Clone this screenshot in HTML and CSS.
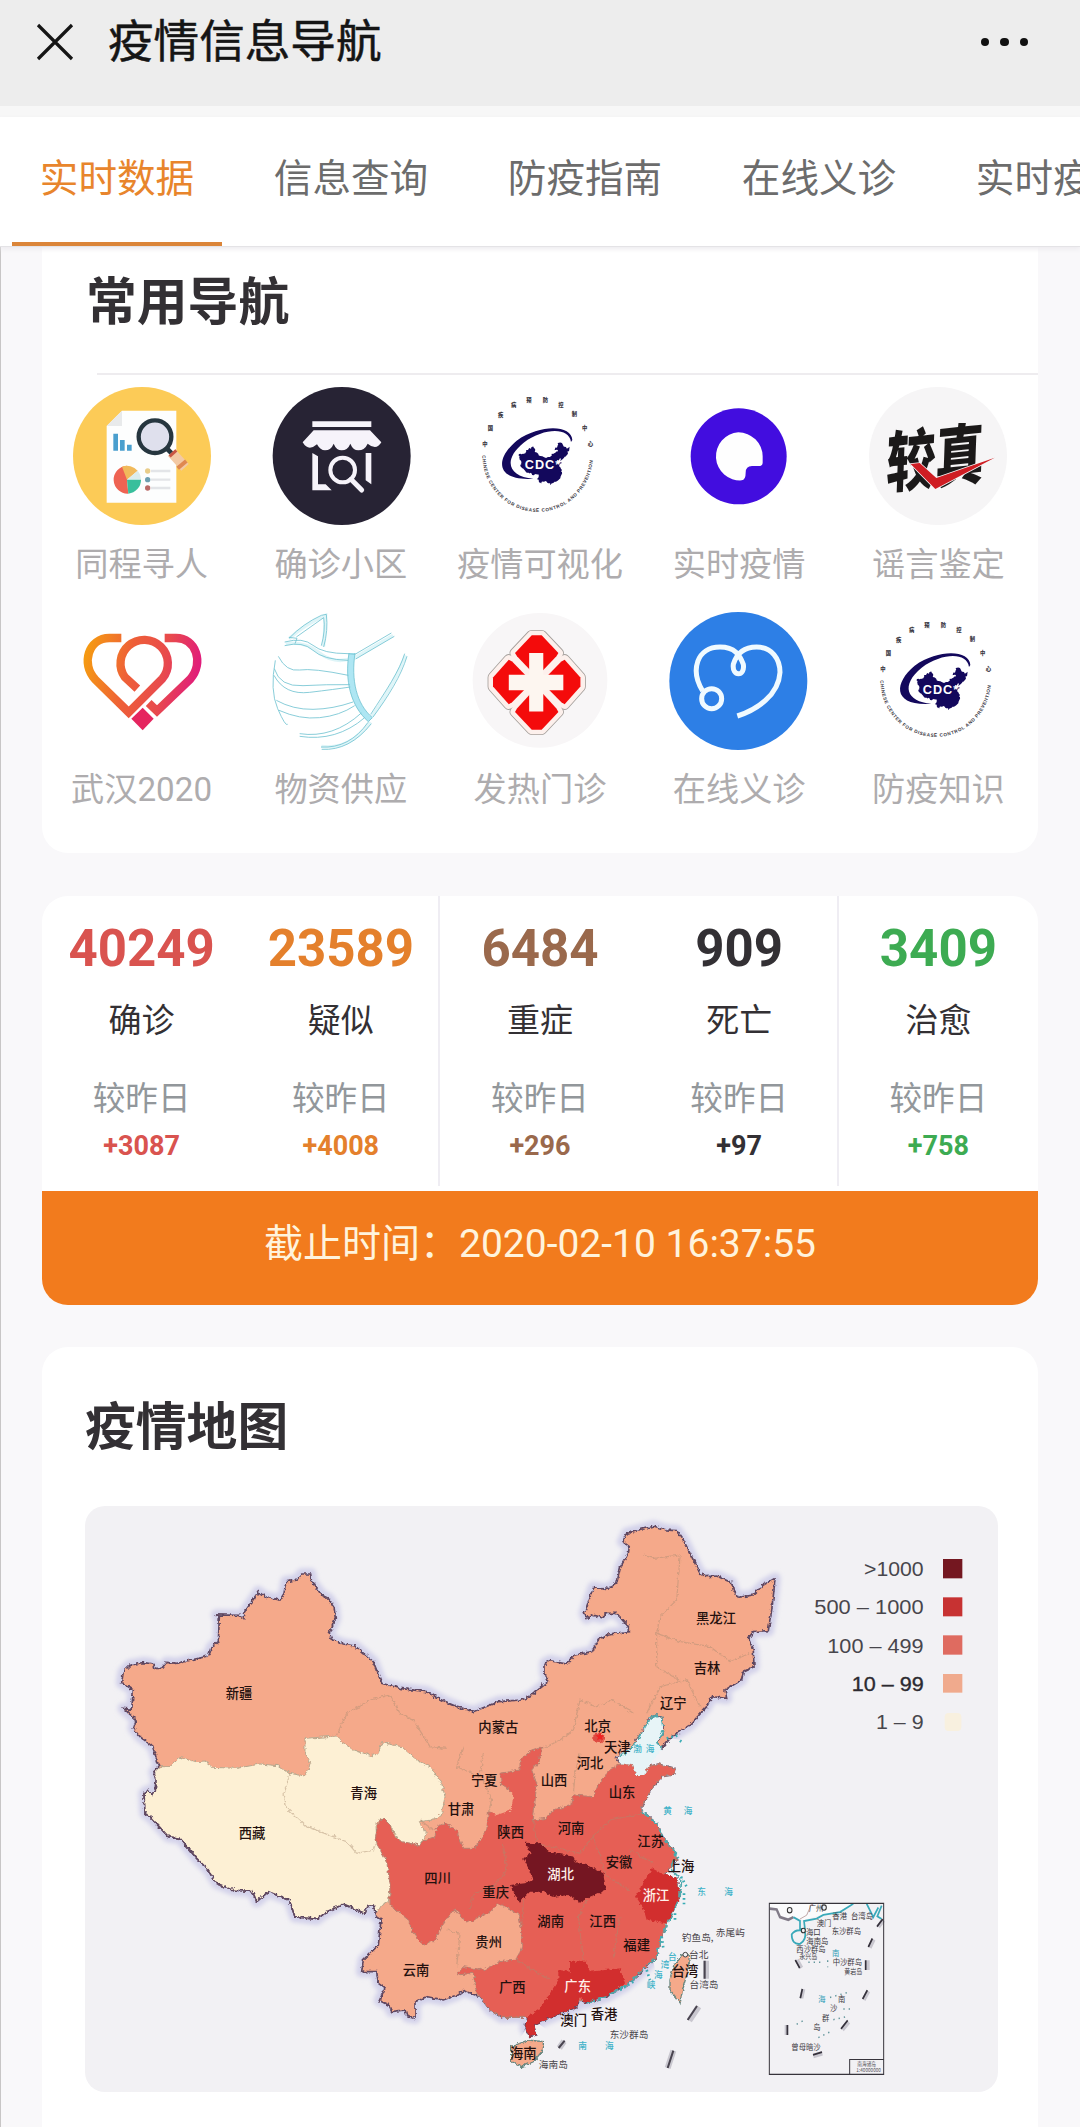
FILE: index.html
```html
<!DOCTYPE html>
<html lang="zh-CN">
<head>
<meta charset="utf-8">
<title>疫情信息导航</title>
<link rel="stylesheet" href="styles.css">
</head>
<body>
<svg class="defs" width="0" height="0" aria-hidden="true">
  <defs>
    <path id="china" d="M237,800L218,740 180,710 160,685 168,660 130,625 155,628 160,570 125,548 130,515 150,495 192,488 218,492 222,505 245,505 260,487 290,490 385,468 395,440 415,425 418,350 410,345 478,346 492,355 495,335 535,275 555,290 600,300 612,280 618,245 650,240 665,222 692,222 695,245 725,285 745,295 762,320 766,355 748,400 755,418 790,432 825,438 880,485 905,550 960,565 1040,575 1090,603 1135,622 1180,635 1255,605 1325,600 1355,585 1405,545 1395,520 1395,490 1410,482 1460,492 1485,465 1535,455 1555,420 1585,402 1645,395 1645,380 1610,340 1580,340 1565,353 1535,345 1520,355 1513,340 1525,305 1540,262 1580,268 1610,250 1622,200 1645,160 1648,140 1628,125 1640,100 1720,78 1760,90 1790,92 1810,120 1860,220 1880,230 1910,228 1955,248 1960,270 1975,292 2020,285 2050,255 2085,235 2082,270 2075,330 2065,392 2020,395 2005,415 2020,450 2022,500 1990,515 1985,540 1935,570 1940,595 1895,590 1880,620 1830,675 1775,710 1745,745 1733,730 1750,690 1745,655 1730,645 1710,655 1690,690 1670,720 1655,745 1625,760 1610,775 1620,790 1655,795 1668,825 1690,825 1705,800 1735,792 1765,800 1785,805 1780,825 1745,830 1715,865 1685,920 1685,935 1730,970 1750,1015 1780,1050 1790,1080 1770,1105 1750,1125 1790,1135 1800,1190 1780,1235 1760,1270 1740,1320 1730,1370 1680,1420 1640,1455 1580,1490 1515,1510 1500,1490 1490,1520 1380,1565 1360,1575 1370,1605 1350,1610 1335,1585 1340,1550 1265,1552 1230,1530 1200,1490 1150,1472 1130,1485 1090,1500 1040,1490 1005,1505 1005,1555 982,1550 975,1530 935,1535 925,1515 898,1502 915,1465 895,1450 890,1415 845,1415 850,1380 895,1335 903,1260 888,1250 880,1215 865,1215 855,1240 790,1213 740,1235 710,1258 645,1250 628,1200 565,1175 530,1205 518,1175 460,1170 410,1150 385,1110 350,1075 300,1015 265,1010 215,955 195,940 192,880 205,872 215,885 226,870 228,840 222,815Z"/>
    <linearGradient id="heart" gradientUnits="userSpaceOnUse" x1="135" y1="860" x2="480" y2="930">
      <stop offset="0" stop-color="#f59a12"/><stop offset=".38" stop-color="#ee5f38"/><stop offset=".68" stop-color="#e84a4d"/><stop offset="1" stop-color="#e0187f"/>
    </linearGradient>
    <g id="petals">
      <path d="M-15,-142H15L66,-88 60,-78 10,-26H-10L-60,-78 -66,-88Z"/>
      <path d="M-15,145H15L66,91 60,81 10,26H-10L-60,81 -66,91Z"/>
      <path d="M133,-14V14L85,68 75,62 26,12V-12L75,-62 85,-68Z"/>
      <path d="M-133,-14V14L-85,68 -75,62 -26,12V-12L-75,-62 -85,-68Z"/>
    </g>
    <symbol id="cdc" viewBox="988 725 414 414">
      <path d="M1175,1000C1060,1008 1060,940 1125,886C1200,834 1290,840 1292,884L1288,890C1282,846 1210,846 1146,892C1082,944 1100,994 1175,1000Z" fill="#13085c"/>
      <use href="#china" transform="translate(1121 885) scale(.078 .083)" fill="#13085c"/>
      <text class="cdc-word" x="1204" y="972">CDC*</text>
      <path id="cdc-arc" d="M1022,930A166,170 0 0 0 1354,930" fill="none"/>
      <text class="cdc-ring"><textPath href="#cdc-arc" textLength="512">CHINESE CENTER FOR DISEASE CONTROL AND PREVENTION</textPath></text>
      <g class="cdc-cn"><text x="1030" y="902">中</text><text x="1046" y="855">国</text><text x="1077" y="815">疾</text><text x="1116" y="785">病</text><text x="1162" y="771">预</text><text x="1211" y="771">防</text><text x="1258" y="785">控</text><text x="1298" y="813">制</text><text x="1329" y="853">中</text><text x="1346" y="902">心</text></g>
    </symbol>
    <filter id="rough" x="-5%" y="-5%" width="110%" height="110%">
      <feTurbulence type="fractalNoise" baseFrequency=".09" numOctaves="3" seed="4"/>
      <feDisplacementMap in="SourceGraphic" scale="14" xChannelSelector="R" yChannelSelector="G"/>
    </filter>
    <filter id="glow" x="-5%" y="-5%" width="110%" height="110%"><feGaussianBlur stdDeviation="7"/></filter>
  </defs>
</svg>

<header class="topbar">
  <svg class="close" viewBox="0 0 38 38"><path d="M2 2 36 36M36 2 2 36"/></svg>
  <h1>疫情信息导航</h1>
  <span class="more"><i></i><i></i><i></i></span>
</header>
<nav class="tabs">
  <a class="active">实时数据</a><a>信息查询</a><a>防疫指南</a><a>在线义诊</a><a>实时疫情</a>
</nav>

<main>
  <section class="card links">
    <h2>常用导航</h2>
    <div class="grid">
      <div class="item">
        <svg viewBox="98 50 414 414">
          <circle cx="305" cy="257" r="207" fill="#fccb57"/>
          <path d="M245,121H408V397H199V167Z" fill="#fdfefe"/><path d="M245,121V167H199Z" fill="#e8eaeb"/>
          <path d="M219,190h14v51h-14zM239,209h14v32h-14zM260,223h14v18h-14z" fill="#4a9fce"/>
          <path d="M260,328V286A42,42 0 1 0 264,370Z" fill="#ee6352"/><path d="M260,328 245,289A42,42 0 0 1 292,301Z" fill="#f1ba5b"/><path d="M260,328 292,301A42,42 0 0 1 302,328Z" fill="#dbeceb"/><path d="M260,328H302A42,42 0 0 1 264,370Z" fill="#38bf9c"/>
          <path d="M332,302h58M332,328h58M332,353h58" stroke="#e3e5e8" stroke-width="7"/>
          <circle cx="322" cy="302" r="8" fill="#e9cd8a"/><circle cx="322" cy="328" r="8" fill="#6d9fb1"/><circle cx="322" cy="353" r="8" fill="#ba6b68"/>
          <path d="M375,230 400,255" stroke="#26363f" stroke-width="14"/>
          <path d="M394,247 434,291" stroke="#f3c9a4" stroke-width="30"/><path d="M388,258 408,240" stroke="#c95543" stroke-width="9"/><path d="M412,294 438,272" stroke="#df8850" stroke-width="12"/>
          <circle cx="344" cy="199" r="49" fill="#dfe0ed" stroke="#26363f" stroke-width="13"/>
        </svg><span>同程寻人</span>
      </div>
      <div class="item">
        <svg viewBox="697 50 414 414">
          <circle cx="906" cy="257" r="207" fill="#272334"/>
          <path d="M818,153H995V170H818Z" fill="#f6f3fa"/>
          <path d="M822,180H991L1025,216Q1010,242 984,220Q975,240 956,240Q940,240 932,220Q924,240 906,240Q890,240 882,220Q874,240 856,240Q842,240 832,222Q806,245 789,216Z" fill="#f6f3fa"/>
          <path d="M818,248 835,258V342H858L876,360H818ZM978,248H995V342L978,330Z" fill="#f6f3fa"/>
          <circle cx="909" cy="299" r="37" fill="none" stroke="#f6f3fa" stroke-width="12"/><path d="M934,327 966,359" stroke="#f6f3fa" stroke-width="15" stroke-linecap="round"/>
        </svg><span>确诊小区</span>
      </div>
      <div class="item"><svg viewBox="0 0 414 414"><use href="#cdc" width="414" height="414"/></svg><span>疫情可视化</span></div>
      <div class="item">
        <svg viewBox="390 50 414 414">
          <circle cx="596" cy="258" r="144" fill="#420ddf"/>
          <path d="M595,186A73,73 0 0 1 668,258V277Q668,287 655,287H636Q617,287 617,307Q617,329 605,330A72,72 0 1 1 595,186Z" fill="#fefefe"/>
        </svg><span>实时疫情</span>
      </div>
      <div class="item">
        <svg viewBox="988 50 414 414">
          <circle cx="1195" cy="257" r="207" fill="#f6f5f6"/>
          <text class="jz" transform="translate(1038 352) rotate(-6) skewX(-8) scale(.92 1.24)">较真</text>
          <path d="M1113,281 1140,278 1190,323 1365,262 1187,356Z" fill="#cf1d23" stroke="#f6f5f6" stroke-width="5" paint-order="stroke"/>
        </svg><span>谣言鉴定</span>
      </div>
      <div class="item">
        <svg viewBox="98 725 414 414">
          <g fill="none" stroke="url(#heart)" stroke-width="25">
            <path d="M243,803H207C145,803 120,880 165,928L265,1026 366,925A71,71 0 1 0 254,921L291,955"/>
            <path d="M373,803H407C467,803 492,878 450,926L350,1022 325,998"/>
          </g>
          <path d="M307,1012 340,1045 307,1080 273,1045Z" fill="#e5255f"/>
        </svg><span>武汉2020</span>
      </div>
      <div class="item">
        <svg viewBox="697 725 414 414">
          <g fill="none" stroke="#dff5f8" stroke-width="10"><path d="M748,805Q800,760 858,735L852,828M738,820Q795,812 840,848T945,862L1060,795M1098,855Q1060,950 995,1040M845,1128Q930,1140 992,1055"/></g>
          <path d="M928,848H946C934,930 950,1000 998,1042L986,1054C932,1006 915,930 928,848Z" fill="#aee6f3"/>
          <g fill="none" stroke="#71c3d1" stroke-width="2.5">
            <path d="M748,804Q790,760 845,735L860,732Q866,780 852,830M770,800 852,742Q858,780 845,826"/>
            <path d="M735,815Q790,800 820,825T925,850L946,852 1055,788M735,826Q790,812 820,840T925,870M948,866 1064,798M748,801 772,804 766,820"/>
            <path d="M928,848C915,930 932,1006 986,1054L998,1042C950,1000 934,930 946,848"/>
            <path d="M1095,850C1080,900 1040,960 993,1032M1102,858C1085,915 1045,980 1000,1040"/>
            <path d="M716,858Q740,905 780,899T926,915M704,895Q720,950 790,946T930,943M703,915Q735,975 810,966T932,950M710,990Q760,1018 820,1017T940,995M718,1020Q780,1048 840,1042T945,1006M780,1090Q880,1105 965,1028M780,1098Q890,1115 975,1042"/>
            <path d="M707,870Q690,960 714,1015T744,1062M844,1130Q930,1135 985,1056M846,1137Q930,1142 995,1060"/>
          </g>
        </svg><span>物资供应</span>
      </div>
      <div class="item">
        <svg viewBox="-210 -213 420 420">
          <circle r="205" cy="-5" fill="#f8f6f7"/>
          <g transform="translate(-10 0)" stroke-linejoin="round">
            <use href="#petals" fill="#a49f9b" stroke="#a49f9b" stroke-width="33"/>
            <use href="#petals" fill="#fdf0ec" stroke="#fdf0ec" stroke-width="28"/>
            <use href="#petals" fill="#f40b0b"/>
            <path d="M-23,-88H20V-22H81V25H20V90H-23V25H-85V-22H-23Z" fill="#fdf6f0"/>
          </g>
        </svg><span>发热门诊</span>
      </div>
      <div class="item">
        <svg viewBox="390 725 414 414">
          <circle cx="595" cy="932" r="207" fill="#2d7fe6"/>
          <g fill="none" stroke="#f0faff" stroke-width="15"><circle cx="515" cy="985" r="30"/>
          <path d="M488,962C450,900 470,830 540,830C585,830 600,855 610,882C616,920 575,920 580,882C588,855 605,830 650,830C695,830 720,865 720,906C716,975 650,1018 592,1037"/></g>
        </svg><span>在线义诊</span>
      </div>
      <div class="item"><svg viewBox="0 0 414 414"><use href="#cdc" width="414" height="414"/></svg><span>防疫知识</span></div>
    </div>
  </section>

  <section class="card stats">
    <div class="cols">
      <div class="stat red"><b>40249</b><span>确诊</span><small>较昨日</small><em>+3087</em></div>
      <div class="stat orange"><b>23589</b><span>疑似</span><small>较昨日</small><em>+4008</em></div>
      <div class="stat brown line"><b>6484</b><span>重症</span><small>较昨日</small><em>+296</em></div>
      <div class="stat dark"><b>909</b><span>死亡</span><small>较昨日</small><em>+97</em></div>
      <div class="stat green line"><b>3409</b><span>治愈</span><small>较昨日</small><em>+758</em></div>
    </div>
    <div class="time">截止时间：2020-02-10 16:37:55</div>
  </section>

  <section class="card map">
    <h2>疫情地图</h2>
    <svg class="chart" viewBox="15 18 2739 1758">
      <use href="#china" fill="#d3d2ea" stroke="#d3d2ea" stroke-width="34" stroke-linejoin="round" filter="url(#glow)"/>
      <path d="M1775,715 1720,600 1600,740 1560,800 1640,900 1740,1500 1500,1640 1300,1640 1360,1560 1700,1800 2400,1500 2200,800Z" fill="#f2f1f4"/>
      <g filter="url(#rough)">
        <use href="#china" fill="#f5a98a" stroke="#5e4660" stroke-width="5"/>
        <path fill="#fdf0d4" stroke="#b7a78d" stroke-width="3" d="M237,800 270,800 300,772 345,785 375,783 400,802 470,805 540,792 595,797 630,820 675,828 692,790 675,755 675,715 770,708 785,725 820,750 875,767 895,760 905,728 965,740 1010,780 1050,800 1085,850 1095,890 1085,940 1060,960 1015,965 1040,1000 1020,1035 960,1025 930,975 905,955 888,970 890,1020 915,1050 925,1085 932,1150 925,1205 905,1215 890,1240 880,1215 865,1215 855,1240 790,1213 740,1235 710,1258 645,1250 628,1200 565,1175 530,1205 518,1175 460,1170 410,1150 385,1110 350,1075 300,1015 265,1010 215,955 195,940 192,880 205,872 215,885 226,870 228,840 222,815Z"/>
        <path fill="none" stroke="#5e4660" stroke-width="5" d="M890,1240 880,1215 865,1215 855,1240 790,1213 740,1235 710,1258 645,1250 628,1200 565,1175 530,1205 518,1175 460,1170 410,1150 385,1110 350,1075 300,1015 265,1010 215,955 195,940 192,880 205,872 215,885 226,870 228,840 222,815 237,800"/>
        <path fill="#e65f55" stroke="#b98272" stroke-width="3" d="M885,1022 895,965 910,955 930,975 945,1010 965,1025 1020,1035 1035,1020 1065,1010 1070,980 1095,970 1130,990 1150,1045 1185,1045 1205,1010 1220,990 1225,940 1290,930 1295,905 1290,870 1265,855 1260,820 1320,810 1320,780 1355,750 1385,740 1378,785 1355,810 1370,850 1360,960 1400,955 1420,930 1475,915 1480,885 1540,890 1555,850 1590,810 1620,790 1655,795 1668,825 1690,825 1705,800 1735,792 1765,800 1785,805 1780,825 1745,830 1715,865 1685,920 1685,935 1730,970 1750,1015 1780,1050 1790,1080 1770,1105 1750,1125 1790,1135 1800,1190 1780,1235 1760,1270 1740,1320 1730,1370 1680,1420 1640,1455 1500,1500 1340,1552 1265,1552 1230,1530 1200,1490 1190,1480 1180,1420 1130,1425 1150,1400 1210,1410 1260,1385 1310,1380 1325,1340 1325,1290 1315,1240 1290,1230 1270,1215 1250,1215 1230,1235 1190,1255 1175,1265 1150,1260 1130,1230 1115,1235 1090,1270 1065,1320 1030,1335 1000,1300 985,1260 930,1215 930,1150 920,1085Z"/>
        <path fill="#f5a98a" d="M1225,935 1235,865 1270,865 1300,880 1295,930 1250,945Z"/>
        <path class="border" d="M630,820 612,880 620,925 680,980 760,1010 800,1025 830,1060 880,1050 890,1020M770,705 800,640 870,600 930,585 960,640 1000,660 1050,740 1100,745M1020,960 1060,990M1150,740 1130,800 1200,830 1210,760M1210,840 1235,900 1225,940M1380,750 1440,720 1480,690 1500,600 1550,620 1600,600 1660,640M1480,885 1485,820 1500,760M1700,640 1740,560 1820,540 1860,620M1730,400 1800,425 1890,440 1950,485 2010,460M1800,170 1790,300 1740,350 1730,400 1730,500 1800,540M1690,165 1720,175 1800,165M1270,1030 1280,1110 1240,1160 1180,1180 1170,1230M1360,960 1370,1030M1370,1030 1500,1060 1540,1010 1590,960 1690,940M1540,1010 1580,1130 1650,1170M1520,1200 1495,1250 1510,1380M1620,1250 1600,1370M1325,1290 1330,1200M1310,1380 1410,1440M1180,1420 1190,1480M1100,1290 1140,1300 1130,1400M1650,1050 1720,1090"/>
        <path fill="#d22d2e" d="M1715,1105 1745,1120 1790,1135 1800,1190 1780,1235 1760,1270 1700,1260 1690,1225 1665,1190 1685,1160Z"/>
        <path fill="#741720" d="M1335,1028 1380,1030 1405,1055 1480,1070 1490,1088 1520,1095 1570,1120 1578,1170 1530,1190 1500,1208 1465,1185 1420,1190 1390,1175 1350,1175 1320,1205 1305,1185 1290,1155 1335,1150 1360,1140 1345,1105 1330,1075 1352,1060Z"/>
        <path fill="#d22d2e" d="M1470,1385 1520,1385 1530,1415 1620,1405 1635,1450 1580,1490 1515,1510 1500,1490 1490,1520 1380,1565 1360,1575 1370,1605 1350,1610 1335,1585 1340,1550 1380,1525 1410,1480 1435,1440 1435,1410 1470,1415Z"/>
        <path fill="#f5a98a" stroke="#68867f" stroke-width="4" d="M1805,1365H1828L1825,1410 1810,1460 1800,1508 1770,1470 1770,1440 1780,1400ZM1295,1640 1345,1620 1390,1625 1390,1650 1360,1685 1325,1700 1295,1685Z"/>
        <path fill="#df4b42" d="M1540,705 1562,696 1575,715 1560,730 1540,722Z"/>
        <path fill="#e7f4f7" d="M1745,745 1733,730 1750,690 1745,655 1730,645 1710,655 1690,690 1670,720 1655,745 1625,760 1610,775 1620,790 1655,795 1668,825 1690,825 1705,800 1735,760Z"/>
        <path fill="none" stroke="#4fa9ad" stroke-width="5" d="M1745,745 1733,730 1750,690 1745,655 1730,645 1710,655 1690,690 1655,745 1620,770M1685,935 1730,970 1750,1015 1790,1060 1770,1105 1805,1140 1800,1190 1780,1235 1740,1320 1730,1370 1640,1455 1580,1490 1515,1510" stroke-dasharray="28 9"/>
      </g>
      <path d="M1760,715 1800,705M1800,722 1808,728M1785,1060 1795,1075M1803,1130 1820,1160M1812,1180V1215M1785,1240V1262M1745,1310 1750,1345M1700,1410 1710,1440M1620,1470 1660,1445" stroke="#39acb5" stroke-width="8" stroke-dasharray="5 9"/>
      <g class="prov">
        <text x="477" y="595">新疆</text><text x="851" y="893">青海</text><text x="516" y="1015">西藏</text><text x="1073" y="1149">四川</text><text x="1008" y="1426">云南</text>
        <text x="1908" y="369">黑龙江</text><text x="1881" y="518">吉林</text><text x="1780" y="624">辽宁</text><text x="1255" y="696">内蒙古</text><text x="1553" y="694">北京</text><text x="1612" y="757">天津</text><text x="1530" y="804">河北</text><text x="1213" y="854">宁夏</text><text x="1422" y="854">山西</text><text x="1626" y="892">山东</text><text x="1143" y="941">甘肃</text>
        <text x="1292" y="1010">陕西</text><text x="1473" y="999">河南</text><text x="1712" y="1038">江苏</text><text x="1617" y="1102">安徽</text><text x="1803" y="1112">上海</text><text x="1247" y="1191">重庆</text><text x="1412" y="1279">湖南</text><text x="1568" y="1279">江西</text><text x="1226" y="1340">贵州</text><text x="1670" y="1351">福建</text><text x="1297" y="1475">广西</text><text x="1815" y="1429">台湾</text><text x="1572" y="1556">香港</text><text x="1481" y="1576">澳门</text><text x="1330" y="1674">海南</text>
        <g class="light"><text x="1442" y="1138">湖北</text><text x="1728" y="1199">浙江</text><text x="1493" y="1474">广东</text></g>
      </g>
      <path d="M1560,697 1564,706 1574,706 1566,712 1569,721 1560,716 1551,721 1554,712 1546,706 1556,706Z" fill="#f02222"/>
      <g class="isle"><text x="1647" y="1615">东沙群岛</text><text x="1420" y="1704">海南岛</text><text x="1872" y="1465">台湾岛</text><text x="1856" y="1374">台北</text><text x="1853" y="1324">钓鱼岛,</text><text x="1951" y="1307">赤尾屿</text></g>
      <circle cx="1816" cy="1364" r="7" fill="#f2f1f4" stroke="#444" stroke-width="3"/>
      <g class="sea"><text x="1673" y="755">渤</text><text x="1710" y="755">海</text><text x="1763" y="943">黄</text><text x="1824" y="943">海</text><text x="1865" y="1184">东</text><text x="1946" y="1184">海</text><text x="1508" y="1646">南</text><text x="1588" y="1646">海</text><text x="1777" y="1379">台</text><text x="1755" y="1404">湾</text><text x="1735" y="1433">海</text><text x="1713" y="1465">峡</text></g>
      <g stroke="#c9c7cf" stroke-width="18"><path d="M1878,1382V1436M1828,1562 1856,1520M1763,1704 1780,1652M1438,1644 1452,1624"/></g>
      <g stroke="#49444f" stroke-width="6"><path d="M1874,1382V1436M1823,1560 1851,1518M1763,1704 1780,1652M1436,1644 1454,1622"/></g>

      <g class="legend">
        <text x="2352" y="227" textLength="179" lengthAdjust="spacingAndGlyphs">&gt;1000</text><rect x="2589" y="177" width="58" height="58" fill="#741720"/>
        <text x="2203" y="342" textLength="328" lengthAdjust="spacingAndGlyphs">500 – 1000</text><rect x="2589" y="292" width="58" height="57" fill="#c73232"/>
        <text x="2242" y="458" textLength="289" lengthAdjust="spacingAndGlyphs">100 – 499</text><rect x="2589" y="406" width="58" height="58" fill="#df6b60"/>
        <text class="on" x="2315" y="573" textLength="216" lengthAdjust="spacingAndGlyphs">10 – 99</text><rect x="2589" y="522" width="58" height="56" fill="#f0aa8d"/>
        <text x="2388" y="688" textLength="143" lengthAdjust="spacingAndGlyphs">1 – 9</text><rect x="2594" y="639" width="50" height="54" rx="12" fill="#f8f0df"/>
      </g>

      <g transform="translate(1980 0) scale(1 1.148)">
        <path d="M89,1055H340L310,1070 270,1080 230,1088 190,1098 160,1090 140,1092 120,1088 110,1070 89,1068Z" fill="#fbfbfc"/>
        <path d="M89,1068 110,1070 120,1090 145,1097 160,1090" fill="none" stroke="#817b88" stroke-width="7"/>
        <path d="M160,1090 180,1100 180,1120 195,1122 192,1100 230,1094 250,1084 300,1077 340,1055M155,1135Q170,1118 195,1128Q200,1150 180,1160Q155,1162 155,1135ZM380,1055 400,1090 415,1065M425,1060 412,1088 425,1095" fill="none" stroke="#39a9b9" stroke-width="5"/>
        <g fill="#f2f1f4" stroke="#333" stroke-width="3"><circle cx="149" cy="1072" r="7"/><circle cx="252" cy="1065" r="7"/><circle cx="190" cy="1125" r="6"/></g>
        <g fill="none" stroke="#a88" stroke-width="2"><path d="M215,1055 200,1085 180,1095"/></g>
        <g stroke="#c9c7cf" stroke-width="12"><path d="M415,1115 430,1098M389,1170 401,1148M171,1202 184,1223M383,1203V1228M184,1302 190,1278M371,1306 385,1283M307,1384 326,1364M140,1372V1398M220,1453 247,1446"/></g>
        <g stroke="#35313b" stroke-width="5"><path d="M411,1115 428,1095M385,1168 397,1146M166,1202 179,1223M377,1203V1228M181,1302 187,1278M368,1304 382,1281M303,1382 323,1360M142,1372V1398M219,1450 246,1443"/></g>
        <g class="mini"><text x="228" y="1074">广州</text><text x="252" y="1113">澳门</text><text x="299" y="1096">香港</text><text x="366" y="1096">台湾岛</text><text x="319" y="1135">东沙群岛</text><text x="220" y="1138">海口</text><text x="232" y="1160">海南岛</text><text x="213" y="1182">西沙群岛</text><text class="small" x="205" y="1200">永兴岛</text><text x="322" y="1215">中沙群岛</text><text class="small" x="340" y="1238">黄岩岛</text><text x="305" y="1313">南</text><text x="281" y="1336">沙</text><text x="257" y="1361">群</text><text x="231" y="1384">岛</text><text x="198" y="1438">曾母暗沙</text></g>
        <g class="mini blue"><text x="287" y="1191">南</text><text x="246" y="1313">海</text></g>
        <path d="M205,1208h40M263,1203v18M270,1300 330,1285M310,1330h30M280,1358 320,1350M170,1370 195,1358M235,1405 270,1390" stroke="#62959b" stroke-width="4" stroke-dasharray="4 12"/>
        <path d="M88,1054H431V1501H88ZM329,1501V1462H431" fill="none" stroke="#37343b" stroke-width="3"/>
        <g class="tiny"><text x="380" y="1480">南海诸岛</text><text x="386" y="1496">1:40000000</text></g>
      </g>
    </svg>
  </section>
</main>
</body>
</html>
```
FILE: styles.css
```css
* { box-sizing: border-box; }
body {
  margin: 0;
  width: 1080px;
  height: 2127px;
  overflow: hidden;
  background: #f9f8fa;
  box-shadow: inset 1px 0 #c8c6c6;
  color: #333034;
  font-family: Roboto, "Noto Sans CJK SC", sans-serif;
}
.defs { position: absolute; }
h1, h2 { margin: 0; }

.topbar {
  display: flex;
  align-items: center;
  height: 117px;
  padding: 0 52px 22px 36px;
  background: #ededed;
  border-bottom: 11px solid #f7f7f7;
}
.close { width: 38px; height: 38px; fill: none; stroke: #151515; stroke-width: 3.2; }
.topbar h1 { margin-left: 34px; padding-top: 2px; font-size: 45.6px; font-weight: 400; line-height: 82px; color: #151515; -webkit-text-stroke: .5px #151515; }
.more { display: flex; gap: 11px; margin-left: auto; }
.more i { width: 8.5px; height: 8.5px; border-radius: 50%; background: #111; }

.tabs {
  display: flex;
  height: 130px;
  padding-left: 12px;
  overflow: hidden;
  background: #fff;
  border-bottom: 1px solid #e4e3e6;
  box-shadow: 0 2px 5px #eceaee;
  position: relative;
}
.tabs a {
  flex: none;
  width: 210px;
  margin-right: 24px;
  text-align: center;
  font-size: 38.6px;
  line-height: 123px;
  color: #6c6c6c;
}
.tabs .active { color: #e8852c; border-bottom: 4px solid #db8539; }

main { padding: 0 42px; }
.card { background: #fff; border-radius: 26px; }
.card h2 { font-size: 50.8px; font-weight: 700; line-height: 74px; padding-left: 44px; }

.links { height: 606px; padding-top: 19px; border-radius: 0 0 26px 26px; }
.links h2 { padding-bottom: 33px; }
.grid {
  display: grid;
  grid-template-columns: repeat(5, 1fr);
  grid-auto-rows: 225px;
  position: relative;
  padding-top: 14px;
}
.grid::before { content: ""; position: absolute; top: 0; left: 55px; right: 0; height: 2px; background: #eeecef; }
.item { display: flex; flex-direction: column; align-items: center; }
.item > svg { width: 138px; height: 138px; overflow: visible; }
.item > span { margin-top: 17px; font-size: 33.2px; line-height: 46px; color: #aeacae; white-space: nowrap; }
.cdc-word { font: 700 38px "Liberation Sans", sans-serif; letter-spacing: 3px; fill: #fff; text-anchor: middle; }
.cdc-ring { font: 700 14px "Liberation Sans", sans-serif; fill: #3a373f; }
.cdc-cn { font: 900 16px "Noto Sans CJK SC", sans-serif; fill: #3a373f; text-anchor: middle; }
.jz { font: 900 160px "Noto Sans CJK SC", sans-serif; fill: #1b1919; }

.stats { margin-top: 43px; height: 409px; overflow: hidden; }
.cols { display: grid; grid-template-columns: repeat(5, 1fr); height: 295px; }
.stat { display: flex; flex-direction: column; align-items: center; height: 290px; padding-top: 23px; }
.stat b { font-size: 51px; line-height: 60px; }
.stat span { margin-top: 17px; font-size: 33px; line-height: 50px; }
.stat small { margin-top: 28px; font-size: 32.6px; line-height: 50px; color: #92979b; }
.stat em { margin-top: 4px; font-size: 27px; font-style: normal; font-weight: 700; line-height: 36px; }
.stat.line { box-shadow: -2px 0 #efedf3; }
.red b, .red em { color: #d9534f; }
.orange b, .orange em { color: #e4802c; }
.brown b, .brown em { color: #9a694c; }
.dark b, .dark em { color: #333034; }
.green b, .green em { color: #3dab52; }
.time { height: 114px; background: #f27b1d; color: #fff3dc; text-align: center; font-size: 39px; line-height: 106px; white-space: nowrap; }

.map { margin-top: 42px; height: 860px; padding: 44px 40px 0 43px; }
.map h2 { padding-left: 0; margin-bottom: 41px; }
.chart { display: block; width: 913px; height: 586px; border-radius: 20px; background: #f2f1f4; }
.border { fill: none; stroke: #a88b72; stroke-opacity: .45; stroke-width: 3.5; }
.prov { font: 500 40px "Noto Sans CJK SC", sans-serif; fill: #23100e; text-anchor: middle; }
.light { fill: #fff0ea; }
.isle { font: 400 29px "Noto Sans CJK SC", sans-serif; fill: #4a464b; text-anchor: middle; }
.sea { font: 500 26px "Noto Sans CJK SC", sans-serif; fill: #3fb2c8; text-anchor: middle; }
.legend { font: 400 59px "Liberation Sans", sans-serif; fill: #48464c; }
.legend .on { fill: #2c2a30; stroke: #2c2a30; stroke-width: 1px; }
.mini { font: 400 22px "Noto Sans CJK SC", sans-serif; fill: #3c383f; text-anchor: middle; }
.small { font-size: 18px; }
.blue { fill: #2c9bb4; }
.tiny { font: 400 14px "Noto Sans CJK SC", sans-serif; fill: #55515a; text-anchor: middle; }
```
